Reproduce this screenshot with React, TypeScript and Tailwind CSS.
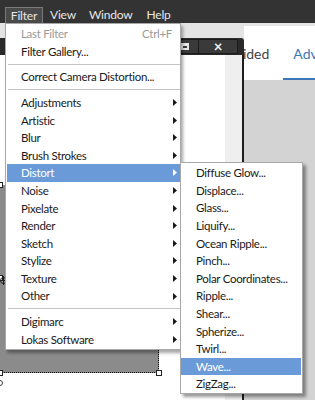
import React from 'react';

const mainItems: ({ label: string; sub?: boolean; hot?: boolean; sep?: false } | { sep: true })[] = [
  { label: 'Adjustments', sub: true },
  { label: 'Artistic', sub: true },
  { label: 'Blur', sub: true },
  { label: 'Brush Strokes', sub: true },
  { label: 'Distort', sub: true, hot: true },
  { label: 'Noise', sub: true },
  { label: 'Pixelate', sub: true },
  { label: 'Render', sub: true },
  { label: 'Sketch', sub: true },
  { label: 'Stylize', sub: true },
  { label: 'Texture', sub: true },
  { label: 'Other', sub: true },
  { sep: true },
  { label: 'Digimarc', sub: true },
  { label: 'Lokas Software', sub: true },
];

const distortItems = [
  'Diffuse Glow...',
  'Displace...',
  'Glass...',
  'Liquify...',
  'Ocean Ripple...',
  'Pinch...',
  'Polar Coordinates...',
  'Ripple...',
  'Shear...',
  'Spherize...',
  'Twirl...',
  'Wave...',
  'ZigZag...',
];

const Arrow = () => (
  <svg width="4" height="7" viewBox="0 0 4 7" className="shrink-0">
    <path d="M0 0 L4 3.5 L0 7 Z" fill="currentColor" />
  </svg>
);

const Sep = () => <div className="ml-[1px] my-[3.5px] h-px bg-[#c4c4c4]" />;

const Handle = ({ className }: { className: string }) => (
  <div className={`absolute w-[6px] h-[6px] bg-white border border-[#222] ${className}`} />
);

const App: React.FC = () => {
  return (
    <div className="relative w-[315px] h-[400px] overflow-hidden bg-[#e4e4e4] font-['Lato',sans-serif] text-[11.5px] tracking-[-0.3px] whitespace-nowrap">
      {/* Menu bar */}
      <div className="h-[23px] bg-[#333333] flex items-end pl-[5px] text-[12px] tracking-[-0.2px] text-[#e6e6e6]">
        <div className="h-[16px] w-[38px] bg-[#4a4a4a] border border-b-0 border-[#7a7a7a] flex items-center justify-center leading-none">
          Filter
        </div>
        <div className="h-[16px] flex items-center ml-[7px] leading-none">View</div>
        <div className="h-[16px] flex items-center ml-[13px] leading-none">Window</div>
        <div className="h-[16px] flex items-center ml-[14px] leading-none">Help</div>
      </div>

      <div className="flex h-[377px]">
        {/* Dialog window */}
        <div className="relative z-10 w-[244px] pt-[15px] flex flex-col">
          <div className="h-[17px] bg-[#2a2a2a] rounded-tr-[3px] flex items-stretch justify-end pr-[6px] py-[1px]">
            <div className="w-[28px] bg-[#3a3a3a] border border-[#1c1c1c] flex items-center justify-center">
              <div className="w-[8px] h-[7px] border-2 border-t-[3px] border-[#e8e8e8]" />
            </div>
            <div className="w-[39px] bg-[#3a3a3a] border border-l-0 border-[#1c1c1c] flex items-center justify-center text-[#f0f0f0] text-[15px] font-bold leading-none">
              ×
            </div>
          </div>
          <div className="flex-1 flex border-r-2 border-[#1e1e1e] bg-white">
            <div className="flex-1 pt-[130px]">
              <div className="relative w-[159px] h-[188px] bg-[#8b8b8b] border-r border-b border-dotted border-[#111]">
                <Handle className="-left-[3px] -top-[3px]" />
                <Handle className="-left-[3px] -bottom-[4px]" />
                <Handle className="-right-[4px] -bottom-[4px]" />
                <Handle className="-left-[3px] top-[90px]" />
                <svg width="9" height="9" viewBox="0 0 9 9" className="absolute -left-[1px] top-[91px]">
                  <circle cx="4.5" cy="4.5" r="3" fill="none" stroke="#222" />
                  <path d="M4.5 0 V9 M0 4.5 H9" stroke="#222" />
                </svg>
                <div className="absolute -left-[3px] -bottom-[14px] w-[6px] h-[6px] rounded-full border border-[#444] bg-white" />
              </div>
            </div>
            <div className="w-[17px] bg-[#efefef]" />
          </div>
        </div>

        {/* Right panel */}
        <div className="flex-1 flex flex-col overflow-hidden">
          <div className="h-[54px] mt-[3px] bg-white flex items-stretch text-[14px] tracking-normal">
            <div className="-ml-[19px] pr-[14px] flex items-center text-[#444]">Guided</div>
            <div className="flex flex-col justify-center relative text-[#3b78b8]">
              <span className="pl-[10px]">Advanced</span>
              <div className="absolute bottom-0 left-0 right-0 h-[2px] bg-[#3b78b8]" />
            </div>
          </div>
          <div className="flex-1 bg-[#d3d3d3]" />
        </div>
      </div>

      {/* Filter menu */}
      <div className="absolute z-20 left-[5px] top-[23px] w-[176px] bg-white border border-[#a8a8a8] pl-[1px] py-[1px] shadow-[2px_3px_3px_rgba(0,0,0,0.35)] text-[#1a1a1a]">
        <div className="h-[17.6px] flex items-center justify-between pl-[14px] pr-[8px] text-[#9a9a9a]">
          <span>Last Filter</span>
          <span>Ctrl+F</span>
        </div>
        <div className="h-[17.6px] flex items-center pl-[14px]">Filter Gallery...</div>
        <Sep />
        <div className="h-[17.6px] flex items-center pl-[14px]">Correct Camera Distortion...</div>
        <Sep />
        {mainItems.map((it, i) =>
          it.sep ? (
            <Sep key={i} />
          ) : (
            <div
              key={i}
              className={`h-[17.6px] flex items-center justify-between pl-[14px] pr-[3px] ${
                it.hot ? 'bg-[#6a9bd8] text-white' : ''
              }`}
            >
              <span>{it.label}</span>
              {it.sub && <Arrow />}
            </div>
          )
        )}
      </div>

      {/* Distort submenu */}
      <div className="absolute z-30 left-[180px] top-[162px] w-[123px] bg-white border border-[#a8a8a8] pt-[1px] shadow-[3px_3px_3px_rgba(0,0,0,0.4)] text-[#1a1a1a]">
        {distortItems.map((label) => (
          <div
            key={label}
            className={`h-[17.6px] flex items-center pl-[15px] mr-[1px] ${
              label === 'Wave...' ? 'bg-[#6a9bd8] text-white' : ''
            }`}
          >
            {label}
          </div>
        ))}
      </div>
    </div>
  );
};

export default App;
